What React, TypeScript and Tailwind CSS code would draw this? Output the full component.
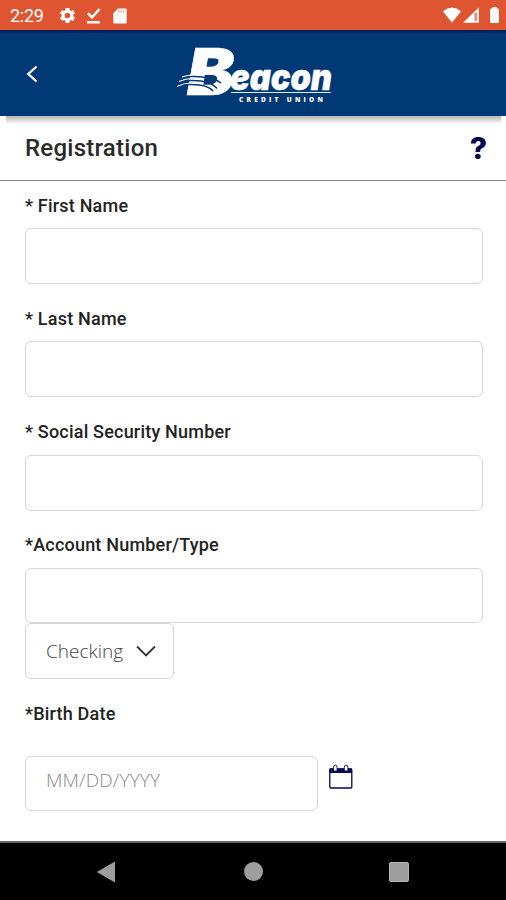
import React from 'react';

const inputBox = 'block rounded-[6px] border-[1.5px] border-[#d6d6d6] bg-white outline-none';
const labelText = 'flex h-6 items-center whitespace-pre text-[18px] font-medium leading-6 text-[#222] tracking-[0.2px]';

const StatusBar: React.FC = () => (
  <div className="flex h-[30px] items-center justify-between bg-[#df5532] text-white">
    <div className="flex h-full items-center pt-px">
      <span className="ml-[10px] w-[48px] text-[18px] leading-[30px] tracking-[-0.3px]">2:29</span>
      <svg className="h-[19px] w-[19px]" viewBox="0 0 24 24" fill="currentColor">
        <path d="M19.14 12.94c.04-.3.06-.61.06-.94 0-.32-.02-.64-.07-.94l2.03-1.58a.49.49 0 0 0 .12-.61l-1.92-3.32a.49.49 0 0 0-.59-.22l-2.39.96c-.5-.38-1.03-.7-1.62-.94l-.36-2.54a.48.48 0 0 0-.48-.41h-3.84a.48.48 0 0 0-.47.41l-.36 2.54c-.59.24-1.13.57-1.62.94l-2.39-.96a.49.49 0 0 0-.59.22L2.74 8.87a.48.48 0 0 0 .12.61l2.03 1.58c-.05.3-.09.63-.09.94s.02.64.07.94l-2.03 1.58a.49.49 0 0 0-.12.61l1.92 3.32c.12.22.37.29.59.22l2.39-.96c.5.38 1.03.7 1.62.94l.36 2.54c.05.24.24.41.48.41h3.84c.24 0 .44-.17.47-.41l.36-2.54c.59-.24 1.13-.56 1.62-.94l2.39.96c.22.08.47 0 .59-.22l1.92-3.32a.48.48 0 0 0-.12-.61l-2.01-1.58zM12 15.6A3.61 3.61 0 0 1 8.4 12c0-1.98 1.62-3.6 3.6-3.6s3.6 1.62 3.6 3.6-1.62 3.6-3.6 3.6z" />
      </svg>
      <svg className="ml-[9px] h-4 w-[15px]" viewBox="0 0 15 16">
        <path d="M2 5.2 6 9.4 13.6 1" fill="none" stroke="currentColor" strokeWidth="2.6" />
        <path d="M1 13h13v2.5H1z" fill="currentColor" />
      </svg>
      <svg className="ml-3 h-4 w-[14px]" viewBox="0 0 14 16">
        <path d="M5 .5h7.5q1.2 0 1.2 1.2v12.6q0 1.2-1.2 1.2h-11Q.3 15.5.3 14.3V5.2z" fill="currentColor" />
        <path d="M5 2.2h1.4v2.5H5zM7.5 2.2h1.4v2.5H7.5zM10 2.2h1.4v2.5H10z" fill="#df5532" opacity=".45" />
      </svg>
    </div>
    <svg className="mr-[7px] h-[18px] w-[57px]" viewBox="0 0 57 18" fill="currentColor">
      <path d="M.8 5.2Q10-2 19.2 5.2L10 16.5z" />
      <path d="M36.8 1.5v15.2H21z" />
      <path d="M32.5 6.8h2.4v8h-2.4z" fill="#df5532" opacity=".75" />
      <path d="M48.500 2.500h2V1h4v1.500h1.200q1.200 0 1.200 1.200v12q0 1.200-1.200 1.200h-6.400q-1.200 0-1.200-1.200v-12q0-1.200 1.200-1.200z" />
    </svg>
  </div>
);

const BeaconLogo: React.FC = () => (
  <svg className="h-[76px] w-[166px] overflow-visible" viewBox="175 34 166 76" fill="#fff">
    <text x="187" y="95" textLength="47" lengthAdjust="spacingAndGlyphs" fontFamily="Inter" fontSize="64" fontWeight="900" fontStyle="italic" stroke="#fff" strokeWidth=".6">B</text>
    <text x="230" y="90" textLength="102" lengthAdjust="spacingAndGlyphs" fontFamily="Inter" fontSize="36" fontWeight="900" fontStyle="italic" stroke="#fff" strokeWidth=".5">eacon</text>
    <path d="M231 92.5h100" stroke="#e5edf7" strokeWidth="1" />
    <text x="239" y="102" textLength="84" fontFamily="Open Sans" fontSize="6.5" fontWeight="800">CREDIT UNION</text>
    {/* Light beams sweeping across the B */}
    <g fill="none" stroke="#003976" strokeWidth="1.5">
      <path d="M189 76.500q22-1 32 6.500" />
      <path d="M188 80.500q22-1 29 8" />
      <path d="M187 84.500q20-1 26 6.500" />
    </g>
    <g fill="none" stroke="#fff" strokeWidth="1.1">
      <path d="M182 77q6-2 11-2" />
      <path d="M179 81.500q7-3 13-3" />
      <path d="M177 86.500q7-3.500 14-3.500" />
    </g>
  </svg>
);

const Header: React.FC = () => (
  <header className="h-[86px] border-t-[3px] border-[#002561] bg-[#003976]">
    <div className="flex h-full items-start">
      <button className="ml-[24px] mt-[31px] h-6 w-4" aria-label="Back">
        <svg className="h-6 w-4" viewBox="0 0 16 24" fill="none" stroke="#fff" strokeWidth="2.3">
          <path d="M12.5 2.5 4.3 10l8.2 7.5" />
        </svg>
      </button>
      <div className="ml-[135px] mt-px">
        <BeaconLogo />
      </div>
    </div>
  </header>
);

const Field: React.FC<{ label: string }> = ({ label }) => (
  <label className="block h-[113.3px]">
    <span className={labelText}>{label}</span>
    <input className={`${inputBox} mt-[10.5px] h-[56px] w-[458px]`} />
  </label>
);

const NavBar: React.FC = () => (
  <nav className="flex h-[59px] items-center border-t-2 border-[#666] bg-black">
    <svg className="ml-[96px] h-[22px] w-[20px]" viewBox="0 0 20 22" fill="#9e9e9e">
      <path d="M19 .5v21L.8 11z" />
    </svg>
    <div className="ml-[128px] h-[19px] w-[19px] rounded-full bg-[#9e9e9e]" />
    <div className="ml-[126px] h-[20px] w-[20px] rounded-[2px] border border-[#b5b5b5] bg-[#9e9e9e]" />
  </nav>
);

const App: React.FC = () => {
  return (
    <div className="flex h-[900px] w-[506px] flex-col overflow-hidden bg-white font-['Roboto',sans-serif]">
      <StatusBar />
      <Header />
      <div className="h-[65px] border-b-[1.5px] border-[#858585]">
        <div className="ml-[6px] h-[8px] w-[495px] bg-linear-to-b from-[#b5b5b2] to-white" />
        <div className="flex h-[48px] items-center justify-between pl-[25px] pr-[19px]">
          <h1 className="text-[24px] font-medium leading-[48px] tracking-[0.25px] text-[#2a2a2a]">Registration</h1>
          <span className="font-['Inter',sans-serif] text-[30px] font-extrabold leading-[48px] text-[#06064f]">?</span>
        </div>
      </div>

      <main className="flex-1 pl-[25px] pt-[12.5px]">
        <Field label="* First Name" />
        <Field label="* Last Name" />
        <Field label="* Social Security Number" />
        <label className="block">
          <span className={labelText}>*Account Number/Type</span>
          <input className={`${inputBox} mt-[10.5px] h-[55px] w-[458px]`} />
        </label>
        <button className={`${inputBox} h-[56px] w-[149px]`}>
          <span className="flex items-center pl-5 font-['Open_Sans',sans-serif] text-[19px] font-[350] text-[#444]">
            Checking
            <svg className="ml-[13px] h-3 w-[20px]" viewBox="0 0 20 12" fill="none" stroke="#333" strokeWidth="1.8">
              <path d="m1 1.5 9 9 9-9" />
            </svg>
          </span>
        </button>
        <div className={`${labelText} mt-[23px]`}>*Birth Date</div>
        <div className="mt-[30px] flex items-start">
          <input
            className={`${inputBox} h-[55px] w-[293px] pb-[6px] pl-5 font-['Open_Sans',sans-serif] text-[19px] font-light tracking-[0.15px] placeholder:text-[#888]`}
            placeholder="MM/DD/YYYY"
          />
          <svg className="ml-[10px] mt-[7px] h-[28px] w-[26px]" viewBox="0 0 26 28" fill="none" stroke="#06064f">
            <rect x="1.8" y="6" width="22" height="19" rx="1" strokeWidth="1.3" />
            <path d="M1.5 5.500h22.500v4.500H1.500z" fill="#06064f" stroke="none" />
            <path d="M5.500 8V4.500Q5.500 2 7.300 2T9.100 4.500V8zM16.300 8V4.500Q16.300 2 18.100 2T19.900 4.500V8z" fill="#fff" strokeWidth=".9" />
          </svg>
        </div>
      </main>
      <NavBar />
    </div>
  );
};

export default App;
